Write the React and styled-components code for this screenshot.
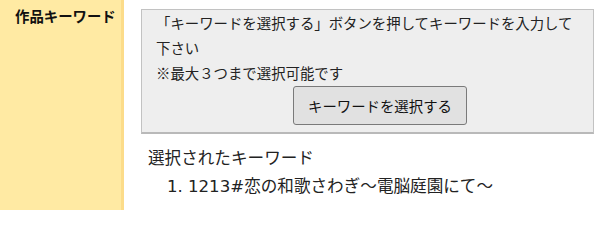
import React from "react";
import styled, { createGlobalStyle } from "styled-components";

const GlobalStyle = createGlobalStyle`
  body {
    margin: 0;
    background: #fff;
    font-family: "Noto Sans CJK JP", "Noto Sans", sans-serif;
    color: #222;
  }
`;

const Row = styled.div`
  display: flex;
  width: 600px;
  height: 210px;
`;

const LabelCell = styled.div`
  width: 124px;
  flex-shrink: 0;
  background: #ffeaa3;
  border-right: 3px solid #fcdc8a;
  padding: 5px 0 0 15px;
  box-sizing: border-box;
  font-size: 14.4px;
  font-weight: bold;
  line-height: 22px;
  color: #111;
`;

const ContentCell = styled.div`
  flex: 1;
  padding: 9px 6px 0 17px;
`;

const NoticeBox = styled.div`
  background: #eeeeee;
  border: 1px solid #c2c2c2;
  border-bottom: 2px solid #b9b9b9;
  padding: 0 12px 7px 14px;
  font-size: 14.4px;
  line-height: 25px;
`;

const NoticeText = styled.p`
  margin: 0;
`;

const ButtonRow = styled.div`
  padding-left: 137px;
  margin-top: 1px;
`;

const SelectButton = styled.button`
  font-family: inherit;
  font-size: 14.4px;
  line-height: 19px;
  color: #111;
  background: #e1e1e1;
  border: 1px solid #7a7a7a;
  border-radius: 3px;
  padding: 9px 14px;
  cursor: pointer;
`;

const SelectedTitle = styled.div`
  margin-top: 8px;
  padding-left: 7px;
  font-size: 16.6px;
  line-height: 30px;
`;

const KeywordList = styled.ol`
  margin: 0;
  padding-left: 47px;
  font-family: "DejaVu Sans", "Noto Sans CJK JP", sans-serif;
  font-size: 16.6px;
  line-height: 30px;
`;

const App = () => {
  const keywords = ["1213#恋の和歌さわぎ～電脳庭園にて～"];

  return (
    <>
      <GlobalStyle />
      <Row>
        <LabelCell>作品キーワード</LabelCell>
        <ContentCell>
          <NoticeBox>
            <NoticeText>
              「キーワードを選択する」ボタンを押してキーワードを入力して下さい
            </NoticeText>
            <NoticeText>※最大３つまで選択可能です</NoticeText>
            <ButtonRow>
              <SelectButton>キーワードを選択する</SelectButton>
            </ButtonRow>
          </NoticeBox>
          <SelectedTitle>選択されたキーワード</SelectedTitle>
          <KeywordList>
            {keywords.map((k) => (
              <li key={k}>{k}</li>
            ))}
          </KeywordList>
        </ContentCell>
      </Row>
    </>
  );
};

export default App;
